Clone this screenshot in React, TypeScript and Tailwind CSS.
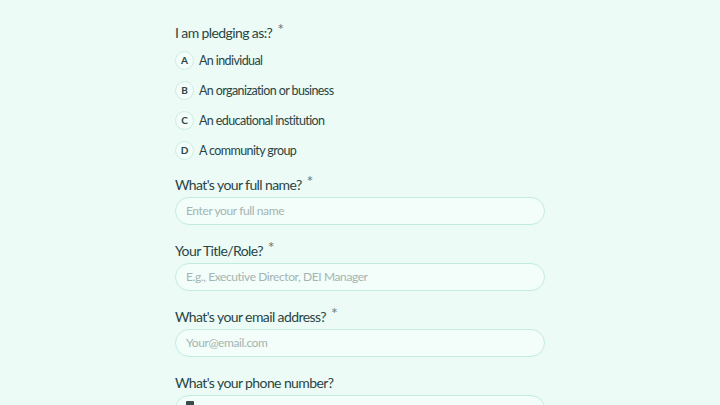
const options = [
  { key: "A", label: "An individual" },
  { key: "B", label: "An organization or business" },
  { key: "C", label: "An educational institution" },
  { key: "D", label: "A community group" },
];

const fields = [
  { label: "What's your full name?", placeholder: "Enter your full name", required: true },
  { label: "Your Title/Role?", placeholder: "E.g., Executive Director, DEI Manager", required: true },
  { label: "What's your email address?", placeholder: "Your@email.com", required: true },
];

function Label({ text, required }: { text: string; required?: boolean }) {
  return (
    <p className="flex items-start text-[14px] leading-[20px] tracking-[-0.6px] text-[#2a4545]">
      {text}
      {required && <span className="ml-[5px] -mt-[4px] text-[16px] text-[#6b7c7b]">*</span>}
    </p>
  );
}

export default function App() {
  return (
    <div
      className="h-[405px] w-[720px] overflow-hidden bg-[#ecfbf6]"
      style={{ fontFamily: "Lato, 'Open Sans', sans-serif" }}
    >
      <div className="mx-auto w-[370px] pt-[23px]">
        <Label text="I am pledging as:?" required />
        <div className="mt-[8px] flex flex-col gap-[11px]">
          {options.map((o) => (
            <div key={o.key} className="flex items-center gap-[5px]">
              <span className="flex h-[19px] w-[19px] items-center justify-center rounded-full border border-[#cdeee3] bg-[#f3fdf9] text-[10px] font-bold text-[#2a4545]">
                {o.key}
              </span>
              <span className="text-[12.5px] leading-[19px] tracking-[-0.6px] text-[#2a4545]">{o.label}</span>
            </div>
          ))}
        </div>

        {fields.map((f, i) => (
          <div key={f.label} className={i === 0 ? "mt-[15px]" : "mt-[16px]"}>
            <Label text={f.label} required={f.required} />
            <div className="mt-[2px] flex h-[28px] items-center rounded-full border border-[#c3ebdf] bg-[#f3fdf9] px-[10px] text-[12px] tracking-[-0.4px] text-[#a3b5b2]">
              {f.placeholder}
            </div>
          </div>
        ))}

        <div className="mt-[16px]">
          <Label text="What's your phone number?" />
          <div className="mt-[2px] flex h-[28px] items-start rounded-full border border-[#c3ebdf] bg-[#f3fdf9] px-[10px] pt-[5px]">
            <span className="h-[8px] w-[8px] rounded-[1px] bg-[#3b4a4a]" />
          </div>
        </div>
      </div>
    </div>
  );
}
